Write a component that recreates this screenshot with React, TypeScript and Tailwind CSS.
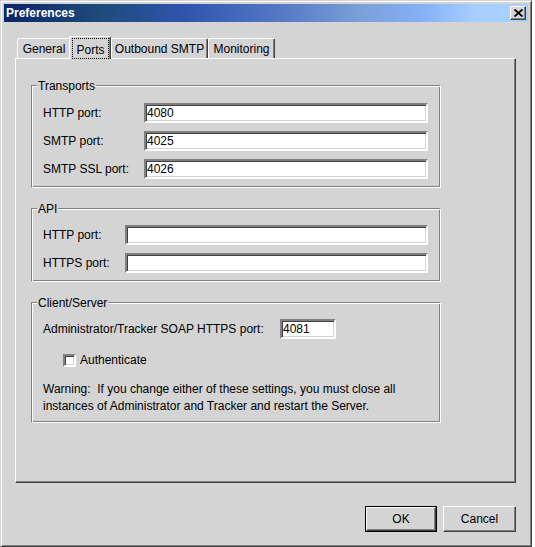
import React from 'react';

const font = "font-['Liberation_Sans',Arial,Helvetica,sans-serif]";
const sunken =
  'border-2 border-t-[#808080] border-l-[#808080] border-b-white border-r-white shadow-[inset_1px_1px_0_#404040,inset_-1px_-1px_0_#d4d4d4]';
const raised =
  'border border-t-white border-l-white border-b-[#404040] border-r-[#404040] shadow-[inset_-1px_-1px_0_#808080]';

function TextField({ value = '', className = '' }: { value?: string; className?: string }) {
  return (
    <div className={`h-[20px] bg-white ${sunken} flex items-center pl-[1px] text-[12px] leading-none ${className}`}>
      {value}
    </div>
  );
}

function GroupBox({ title, className = '', children }: { title: string; className?: string; children: React.ReactNode }) {
  return (
    <div
      className={`relative w-[410px] border border-t-[#808080] border-l-[#808080] border-b-white border-r-white shadow-[inset_1px_1px_0_white,inset_-1px_-1px_0_#808080] ${className}`}
    >
      <span className="absolute -top-[7px] left-[5px] px-[1px] bg-[#d4d4d4] leading-[14px]">{title}</span>
      {children}
    </div>
  );
}

function Tab({ label, className = '', selected = false }: { label: string; className?: string; selected?: boolean }) {
  if (selected) {
    return (
      <div
        className={`relative z-10 -mb-px h-[23px] bg-[#d4d4d4] border-l border-t border-r border-l-white border-t-white border-r-[#404040] rounded-t-[2px] shadow-[inset_-1px_0_0_#808080] flex ${className}`}
      >
        <div className="flex-1 ml-[2px] mr-[1px] mt-[1px] border border-dotted border-black flex items-start justify-center pt-[2px]">
          {label}
        </div>
      </div>
    );
  }
  return (
    <div
      className={`h-[20px] bg-[#d4d4d4] border-l border-t border-r border-l-white border-t-white border-r-[#404040] rounded-t-[2px] shadow-[inset_-1px_0_0_#808080] flex items-center justify-center pt-[1px] ${className}`}
    >
      {label}
    </div>
  );
}

export default function App() {
  return (
    <div className={`w-[535px] h-[547px] bg-white text-black text-[12px] ${font}`}>
      <div className="w-[532px] h-[547px] bg-[#d4d4d4] border border-t-[#d4d4d4] border-l-[#d4d4d4] border-r-[#404040] border-b-[#404040] shadow-[inset_1px_1px_0_white,inset_-1px_-1px_0_#808080] p-[3px] flex flex-col">
        {/* title bar */}
        <div className="h-[18px] bg-[linear-gradient(to_right,#0a246a_0%,#1e4a7a_18%,#2f55b0_35%,#5a7ec8_55%,#7aa0d8_68%,#86b0f8_80%,#a6d0ff_90%,#a6d0ff_100%)] flex items-center justify-between pl-[2px] pr-[2px]">
          <span className="text-white font-bold text-[12px] leading-none">Preferences</span>
          <div className={`w-[16px] h-[14px] bg-[#d4d4d4] ${raised} flex items-center justify-center`}>
            <svg width="9" height="8" viewBox="0 0 9 8">
              <path d="M0.5 0.5 L8.5 7.5 M8.5 0.5 L0.5 7.5" stroke="black" strokeWidth="1.8" fill="none" />
            </svg>
          </div>
        </div>

        <div className="ml-[11px] mt-[14px] w-[501px] flex flex-col">
          {/* tabs */}
          <div className="h-[22px] flex items-end pl-[2px]">
            <Tab label="General" className="w-[54px]" />
            <Tab label="Ports" selected className="-ml-[2px] w-[42px]" />
            <Tab label="Outbound SMTP" className="w-[97px]" />
            <Tab label="Monitoring" className="w-[67px]" />
          </div>

          {/* panel */}
          <div className="h-[425px] border border-t-white border-l-white border-r-[#404040] border-b-[#404040] shadow-[inset_-1px_-1px_0_#808080] pl-[15px] pt-[26px] flex flex-col gap-[20px]">
            <GroupBox title="Transports" className="pt-[17px] pb-[8px] pl-[11px] pr-[11px] flex flex-col gap-[8px]">
              {[
                ['HTTP port:', '4080'],
                ['SMTP port:', '4025'],
                ['SMTP SSL port:', '4026'],
              ].map(([label, value]) => (
                <div key={label} className="flex items-center">
                  <span className="w-[101px]">{label}</span>
                  <TextField value={value} className="w-[284px]" />
                </div>
              ))}
            </GroupBox>

            <GroupBox title="API" className="pt-[16px] pb-[8px] pl-[11px] pr-[11px] flex flex-col gap-[8px]">
              {['HTTP port:', 'HTTPS port:'].map((label) => (
                <div key={label} className="flex items-center">
                  <span className="w-[82px]">{label}</span>
                  <TextField className="w-[303px]" />
                </div>
              ))}
            </GroupBox>

            <GroupBox title="Client/Server" className="pt-[16px] pb-[7px] pl-[11px] pr-[11px] flex flex-col">
              <div className="flex items-center">
                <span className="w-[237px]">Administrator/Tracker SOAP HTTPS port:</span>
                <TextField value="4081" className="w-[56px]" />
              </div>
              <div className="mt-[13px] h-[16px] flex items-center">
                <div className={`ml-[20px] w-[13px] h-[13px] bg-white ${sunken}`} />
                <span className="ml-[4px]">Authenticate</span>
              </div>
              <p className="mt-[13px] leading-[17px]">
                {'Warning:\u00a0 If you change either of these settings, you must close all'}
                <br />
                instances of Administrator and Tracker and restart the Server.
              </p>
            </GroupBox>
          </div>

          {/* buttons */}
          <div className="mt-[23px] flex justify-end gap-[6px]">
            <button className="w-[72px] h-[26px] border border-black bg-[#d4d4d4] p-0">
              <div className={`h-full ${raised} flex items-center justify-center`}>OK</div>
            </button>
            <button className={`w-[73px] h-[26px] bg-[#d4d4d4] ${raised} flex items-center justify-center`}>
              Cancel
            </button>
          </div>
        </div>
      </div>
    </div>
  );
}
